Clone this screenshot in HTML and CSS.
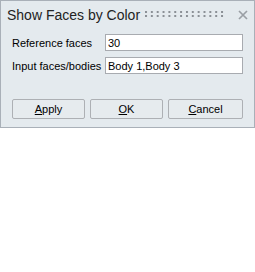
FILE: index.html
```html
<!DOCTYPE html>
<html lang="en">
<head>
  <meta charset="UTF-8" />
  <title>Show Faces by Color</title>
  <link rel="stylesheet" href="styles.css">
</head>
<body>

  <div class="dialog">
    <div class="title-bar">
      <span class="title">Show Faces by Color</span>
      <svg class="grip" width="80" height="6" viewBox="0 0 80 6">
        <defs>
          <pattern id="dots" width="5.85" height="4" patternUnits="userSpaceOnUse">
            <rect width="2" height="2" fill="#8b9096" />
          </pattern>
        </defs>
        <rect width="80" height="6" fill="url(#dots)" />
      </svg>
      <svg class="close" width="10" height="10" viewBox="0 0 10 10">
        <path d="M1 1 L9 9 M9 1 L1 9" stroke="#9a9fa5" stroke-width="1.7" fill="none" />
      </svg>
    </div>

    <div class="form">
      <label class="label" for="refFaces">Reference faces</label>
      <input type="text" id="refFaces" class="field" value="30" />
      <label class="label" for="inputFaces">Input faces/bodies</label>
      <input type="text" id="inputFaces" class="field" value="Body 1,Body 3" />
    </div>

    <div class="buttons">
      <button class="button"><u>A</u>pply</button>
      <button class="button"><u>O</u>K</button>
      <button class="button"><u>C</u>ancel</button>
    </div>
  </div>

</body>
</html>
```

FILE: styles.css
```css
body {
  margin: 0;
  padding: 0;
  background-color: #fff;
  font-family: "Liberation Sans", Arial, sans-serif;
}
.dialog {
  width: 255px;
  height: 128px;
  box-sizing: border-box;
  border: 1px solid #a9b0b8;
  background-color: #e4eaee;
}
.title-bar {
  height: 27px;
  display: flex;
  align-items: flex-start;
  padding: 0 6px;
}
.title {
  font-size: 14px;
  line-height: 16px;
  margin-top: 6px;
  color: #222;
}
.grip {
  margin-left: auto;
  margin-top: 10px;
}
.close {
  margin-left: 13px;
  margin-top: 9px;
}
.form {
  display: grid;
  grid-template-columns: 93px 138px;
  row-gap: 6px;
  padding: 6px 11px 0 11px;
  align-items: center;
}
.label {
  font-size: 11px;
  color: #000;
}
.field {
  height: 17px;
  box-sizing: border-box;
  border: 1px solid #a8abb0;
  background-color: #fff;
  padding: 0 2px;
  margin: 0;
  font-family: "Liberation Sans", Arial, sans-serif;
  font-size: 11px;
  color: #000;
  outline: none;
}
.buttons {
  display: flex;
  gap: 5px;
  padding: 25px 11px 0 11px;
}
.button {
  width: 73px;
  height: 20px;
  padding: 0;
  border: 1px solid #adb0b4;
  border-radius: 2px;
  background-color: #e6ebee;
  font-family: "Liberation Sans", Arial, sans-serif;
  font-size: 11px;
  color: #000;
}
.button:last-child {
  width: 75px;
}
```
